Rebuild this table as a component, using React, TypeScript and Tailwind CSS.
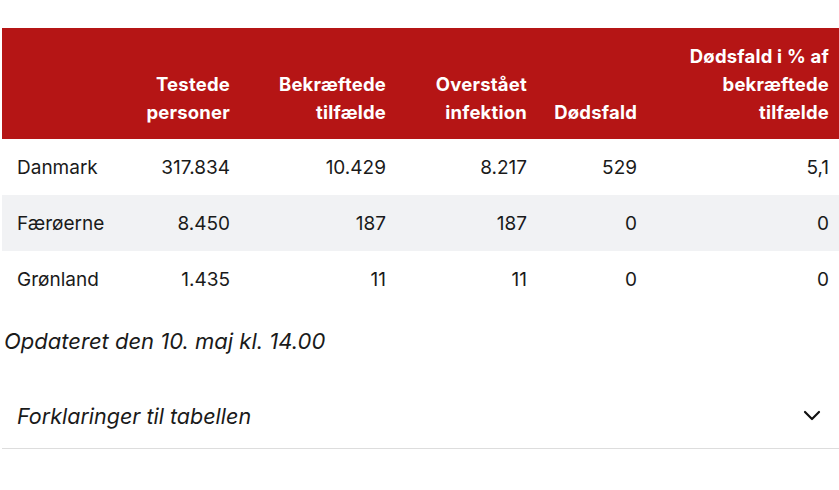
import React from "react";

const rows = [
  ["Danmark", "317.834", "10.429", "8.217", "529", "5,1"],
  ["Færøerne", "8.450", "187", "187", "0", "0"],
  ["Grønland", "1.435", "11", "11", "0", "0"],
];

export default function App() {
  return (
    <div className="w-[839px] h-[490px] overflow-hidden bg-white text-[#1a1a1a]" style={{ fontFamily: "Inter, 'Open Sans', sans-serif" }}>
      <div className="pt-[28px] pl-[2px]">
        <table className="table-fixed border-collapse w-[837px]">
          <colgroup>
            <col className="w-[138px]" />
            <col className="w-[100px]" />
            <col className="w-[156px]" />
            <col className="w-[141px]" />
            <col className="w-[110px]" />
            <col className="w-[192px]" />
          </colgroup>
          <thead>
            <tr className="bg-[#b51515] text-white text-[18.5px] font-bold leading-[28px] tracking-[0.2px]">
              <th className="pl-[15px] pt-[14px] pb-[13px]"></th>
              <th className="text-right align-bottom pr-[10px] pt-[14px] pb-[13px] whitespace-nowrap">Testede<br />personer</th>
              <th className="text-right align-bottom pr-[10px] pt-[14px] pb-[13px] whitespace-nowrap">Bekræftede<br />tilfælde</th>
              <th className="text-right align-bottom pr-[10px] pt-[14px] pb-[13px] whitespace-nowrap">Overstået<br />infektion</th>
              <th className="text-right align-bottom pr-[10px] pt-[14px] pb-[13px] whitespace-nowrap">Dødsfald</th>
              <th className="text-right align-bottom pr-[10px] pt-[14px] pb-[13px] whitespace-nowrap">Dødsfald i % af<br />bekræftede<br />tilfælde</th>
            </tr>
          </thead>
          <tbody>
            {rows.map((r, i) => (
              <tr key={r[0]} className={`h-[56px] text-[19px] leading-[30px] ${i === 1 ? "bg-[#f1f2f4]" : "bg-white"}`}>
                {r.map((c, j) => (
                  <td key={j} className={j === 0 ? "pl-[15px] pt-[2px] text-left whitespace-nowrap" : "pr-[10px] pt-[2px] text-right whitespace-nowrap"}>{c}</td>
                ))}
              </tr>
            ))}
          </tbody>
        </table>
      </div>
      <p className="pl-[4px] mt-[20px] italic text-[22px] leading-[28px]">Opdateret den 10. maj kl. 14.00</p>
      <div className="ml-[2px] mt-[28px] border-b border-[#dddddd] h-[66px] flex items-start justify-between pl-[15px] pr-[18px] pt-[19px]">
        <span className="italic text-[21.5px] leading-[28px]">Forklaringer til tabellen</span>
        <svg width="18" height="12" viewBox="0 0 18 12" className="mt-[8px]">
          <path d="M2 2 L9 9 L16 2" fill="none" stroke="#111" strokeWidth="2.2" strokeLinecap="round" strokeLinejoin="round" />
        </svg>
      </div>
    </div>
  );
}
